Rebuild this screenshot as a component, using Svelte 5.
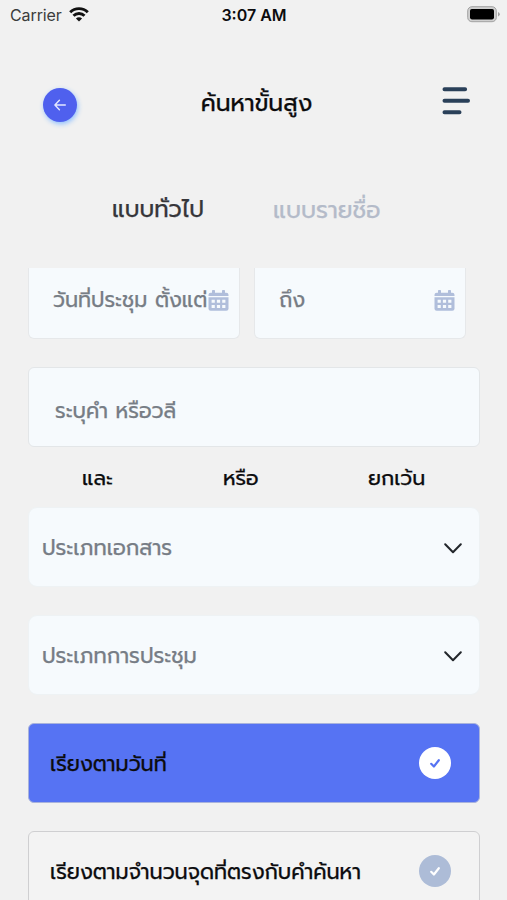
<script>
  let tab = $state('general');
  let sort = $state('date');

  const tabs = [
    { id: 'general', label: 'แบบทั่วไป' },
    { id: 'names', label: 'แบบรายชื่อ' },
  ];
  const dates = [
    { id: 'from', label: 'วันที่ประชุม ตั้งแต่' },
    { id: 'to', label: 'ถึง' },
  ];
  const operators = [
    { id: 'and', label: 'และ' },
    { id: 'or', label: 'หรือ' },
    { id: 'not', label: 'ยกเว้น' },
  ];
  const selects = [
    { id: 'doc', label: 'ประเภทเอกสาร' },
    { id: 'meeting', label: 'ประเภทการประชุม' },
  ];
  const sorts = [
    { id: 'date', label: 'เรียงตามวันที่' },
    { id: 'score', label: 'เรียงตามจำนวนจุดที่ตรงกับคำค้นหา' },
  ];
</script>

<div class="screen">
  <div class="status">
    <div class="carrier">
      <span>Carrier</span>
      <svg width="20" height="15" viewBox="0 0 20 15">
        <g fill="none" stroke="#111" stroke-width="2.9">
          <path d="M1.2 5.3a12.4 12.4 0 0 1 17.6 0" />
          <path d="M4.5 8.8a7.8 7.8 0 0 1 11 0" />
        </g>
        <path d="M10 14.6 6.9 11.5a4.4 4.4 0 0 1 6.2 0z" fill="#111" />
      </svg>
    </div>
    <div class="time">3:07 AM</div>
    <svg class="battery" width="33" height="17" viewBox="0 0 33 17">
      <rect x=".7" y=".7" width="28.6" height="15" rx="4.2" fill="#cfcfcf" stroke="#a2a2a2" />
      <rect x="3" y="3" width="24" height="10.4" rx="1.8" fill="#000" />
      <path d="M31 6v4.6q1.8-.8 1.8-2.3T31 6z" fill="#a2a2a2" />
    </svg>
  </div>

  <header>
    <button class="back" aria-label="back">
      <svg width="12" height="12" viewBox="0 0 12 12">
        <path d="M11.3 6H1M5.4 1.3.9 6l4.5 4.7" fill="none" stroke="#e4e8ff" stroke-width="1.4" stroke-linecap="round" stroke-linejoin="round" />
      </svg>
    </button>
    <h1>ค้นหาขั้นสูง</h1>
    <button class="menu" aria-label="menu">
      <svg width="28" height="28" viewBox="0 0 28 28">
        <g stroke="#2a4059" stroke-width="4" stroke-linecap="round">
          <path d="M2.500 2.300h20.600M2.500 13.800h23.500M2.500 25.200h15" />
        </g>
      </svg>
    </button>
  </header>

  <nav>
    {#each tabs as t (t.id)}
      <button class="tab" class:active={tab === t.id} onclick={() => (tab = t.id)}>{t.label}</button>
    {/each}
  </nav>

  <main>
    <div class="dates">
      {#each dates as d (d.id)}
        <div class="date">
          <span class="label">{d.label}</span>
          <svg width="21" height="21" viewBox="0 0 21 21">
            <path fill="#b0bedb" fill-rule="evenodd" d="M4.800 0h1.400q.8 0 .8.8v2h7v-2q0-.8.8-.8h1.400q.8 0 .8.8v2h1.300q2.200 0 2.200 2v1.200H.5V4.800q0-2 2.200-2H4V.8Q4 0 4.800 0zM.5 7.200h20v11.600q0 2-2.200 2H2.700q-2.200 0-2.200-2zM3.600 9.800v2.900h3.200V9.800zm5.300 0v2.900h3.200V9.800zm5.300 0v2.900h3.200V9.800zM3.600 15v2.900h3.200V15zm5.300 0v2.900h3.200V15zm5.300 0v2.900h3.200V15z" />
          </svg>
        </div>
      {/each}
    </div>

    <div class="search"><span class="label">ระบุคำ หรือวลี</span></div>

    <div class="operators">
      {#each operators as op (op.id)}
        <span class="label {op.id}">{op.label}</span>
      {/each}
    </div>

    {#each selects as s (s.id)}
      <div class="select">
        <span class="label">{s.label}</span>
        <svg width="18" height="11" viewBox="0 0 18 11">
          <path d="M1.200 1.200 9 9.200l7.800-8" fill="none" stroke="#22262b" stroke-width="2" stroke-linecap="round" stroke-linejoin="round" />
        </svg>
      </div>
    {/each}

    {#each sorts as s (s.id)}
      <button class="sort" class:selected={sort === s.id} onclick={() => (sort = s.id)}>
        <span class="label">{s.label}</span>
        <span class="check">
          <svg width="10" height="9" viewBox="0 0 10 9">
            <path d="m1.200 4.800 2.700 2.700L8.800 1.200" fill="none" stroke="currentColor" stroke-width="2.200" stroke-linecap="round" stroke-linejoin="round" />
          </svg>
        </span>
      </button>
    {/each}
  </main>
</div>

<style>
  :global(body) { background: #f1f1f1; }

  .screen {
    width: 507px;
    height: 900px;
    overflow: hidden;
    display: flex;
    flex-direction: column;
    background: #f1f1f1;
    color: #0c0c0e;
    font-family: Prompt, Kanit, "Noto Sans Thai", "Noto Sans", sans-serif;
    font-size: 20.8px;
    -webkit-text-stroke: 0.25px currentColor;
  }

  button {
    border: 0;
    padding: 0;
    background: none;
    font: inherit;
    color: inherit;
  }

  .label { white-space: nowrap; }

  .status {
    display: grid;
    grid-template-columns: 1fr auto 1fr;
    align-items: center;
    box-sizing: border-box;
    height: 30px;
    padding: 0 8px 1px 10px;
    font-family: Inter, sans-serif;
    font-size: 16px;
    -webkit-text-stroke: 0;
  }
  .carrier { display: flex; align-items: center; gap: 7px; color: #3c3c3c; letter-spacing: -0.1px; }
  .time { font-weight: 600; margin-right: 1px; }
  .battery { justify-self: end; margin-right: -1px; }

  header {
    display: flex;
    align-items: center;
    justify-content: space-between;
    height: 150px;
    padding: 0 37px 0 43px;
  }
  .back {
    width: 34px;
    height: 34px;
    border-radius: 50%;
    background: #4f60ee;
    box-shadow: 1px 2px 5px #8ebfff;
    display: grid;
    place-items: center;
  }
  h1 {
    margin: 0 0 4px;
    padding-right: 6px;
    font-size: 23.5px;
    font-weight: 400;
    line-height: 34px;
  }
  .menu { height: 28px; margin-bottom: 8px; }

  nav {
    box-sizing: border-box;
    display: flex;
    gap: 69px;
    height: 88px;
    padding: 13px 0 0 112px;
    align-items: flex-start;
  }
  .tab { color: #b4bbc9; font-size: 23.4px; line-height: 34px; white-space: nowrap; }
  .tab.active { color: #36363a; font-size: 22.9px; }

  main {
    flex: 1;
    overflow: hidden;
    padding: 0 27px 0 28px;
    display: flex;
    flex-direction: column;
  }
  main > * { flex-shrink: 0; box-sizing: border-box; }

  .dates { display: flex; gap: 14px; margin-bottom: 28px; }
  .date {
    box-sizing: border-box;
    width: 212px;
    height: 71px;
    padding: 0 10px 6px 24px;
    display: flex;
    align-items: center;
    justify-content: space-between;
    background: #f6fafd;
    border: 1px solid #e6e8ea;
    border-top: 0;
    border-radius: 0 0 6px 6px;
    color: #777d85;
  }
  .date svg { flex-shrink: 0; }

  .search {
    height: 80px;
    padding: 8px 26px 0;
    display: flex;
    align-items: center;
    background: #f6fafd;
    border: 1px solid #e3e6e8;
    border-radius: 6px;
    color: #777d85;
  }

  .operators {
    display: flex;
    height: 60px;
    padding: 2px 0 0 54px;
    align-items: center;
    font-size: 20.6px;
  }
  .operators .label { flex-shrink: 0; }
  .and { width: 141px; }
  .or { width: 145px; }

  .select {
    height: 80px;
    margin-bottom: 28px;
    padding: 2px 17px 0 13px;
    display: flex;
    align-items: center;
    justify-content: space-between;
    background: #f6fafd;
    border: 1px solid #eef2f4;
    border-radius: 9px;
    color: #777d86;
    font-size: 21.1px;
  }

  .sort {
    height: 80px;
    margin-bottom: 28px;
    padding: 0 28px 0 21px;
    display: flex;
    align-items: center;
    justify-content: space-between;
    background: #f3f3f3;
    border: 1px solid #cfcfd1;
    border-radius: 6px;
    text-align: left;
  }
  .sort .label { padding-top: 2px; }
  .sort.selected { background: #5673f3; border-color: #a9b3dc; }
  .check {
    width: 32px;
    height: 32px;
    border-radius: 50%;
    background: #adbcd7;
    color: #fff;
    display: grid;
    place-items: center;
  }
  .selected .check { background: #fff; color: #5673f3; }
</style>
